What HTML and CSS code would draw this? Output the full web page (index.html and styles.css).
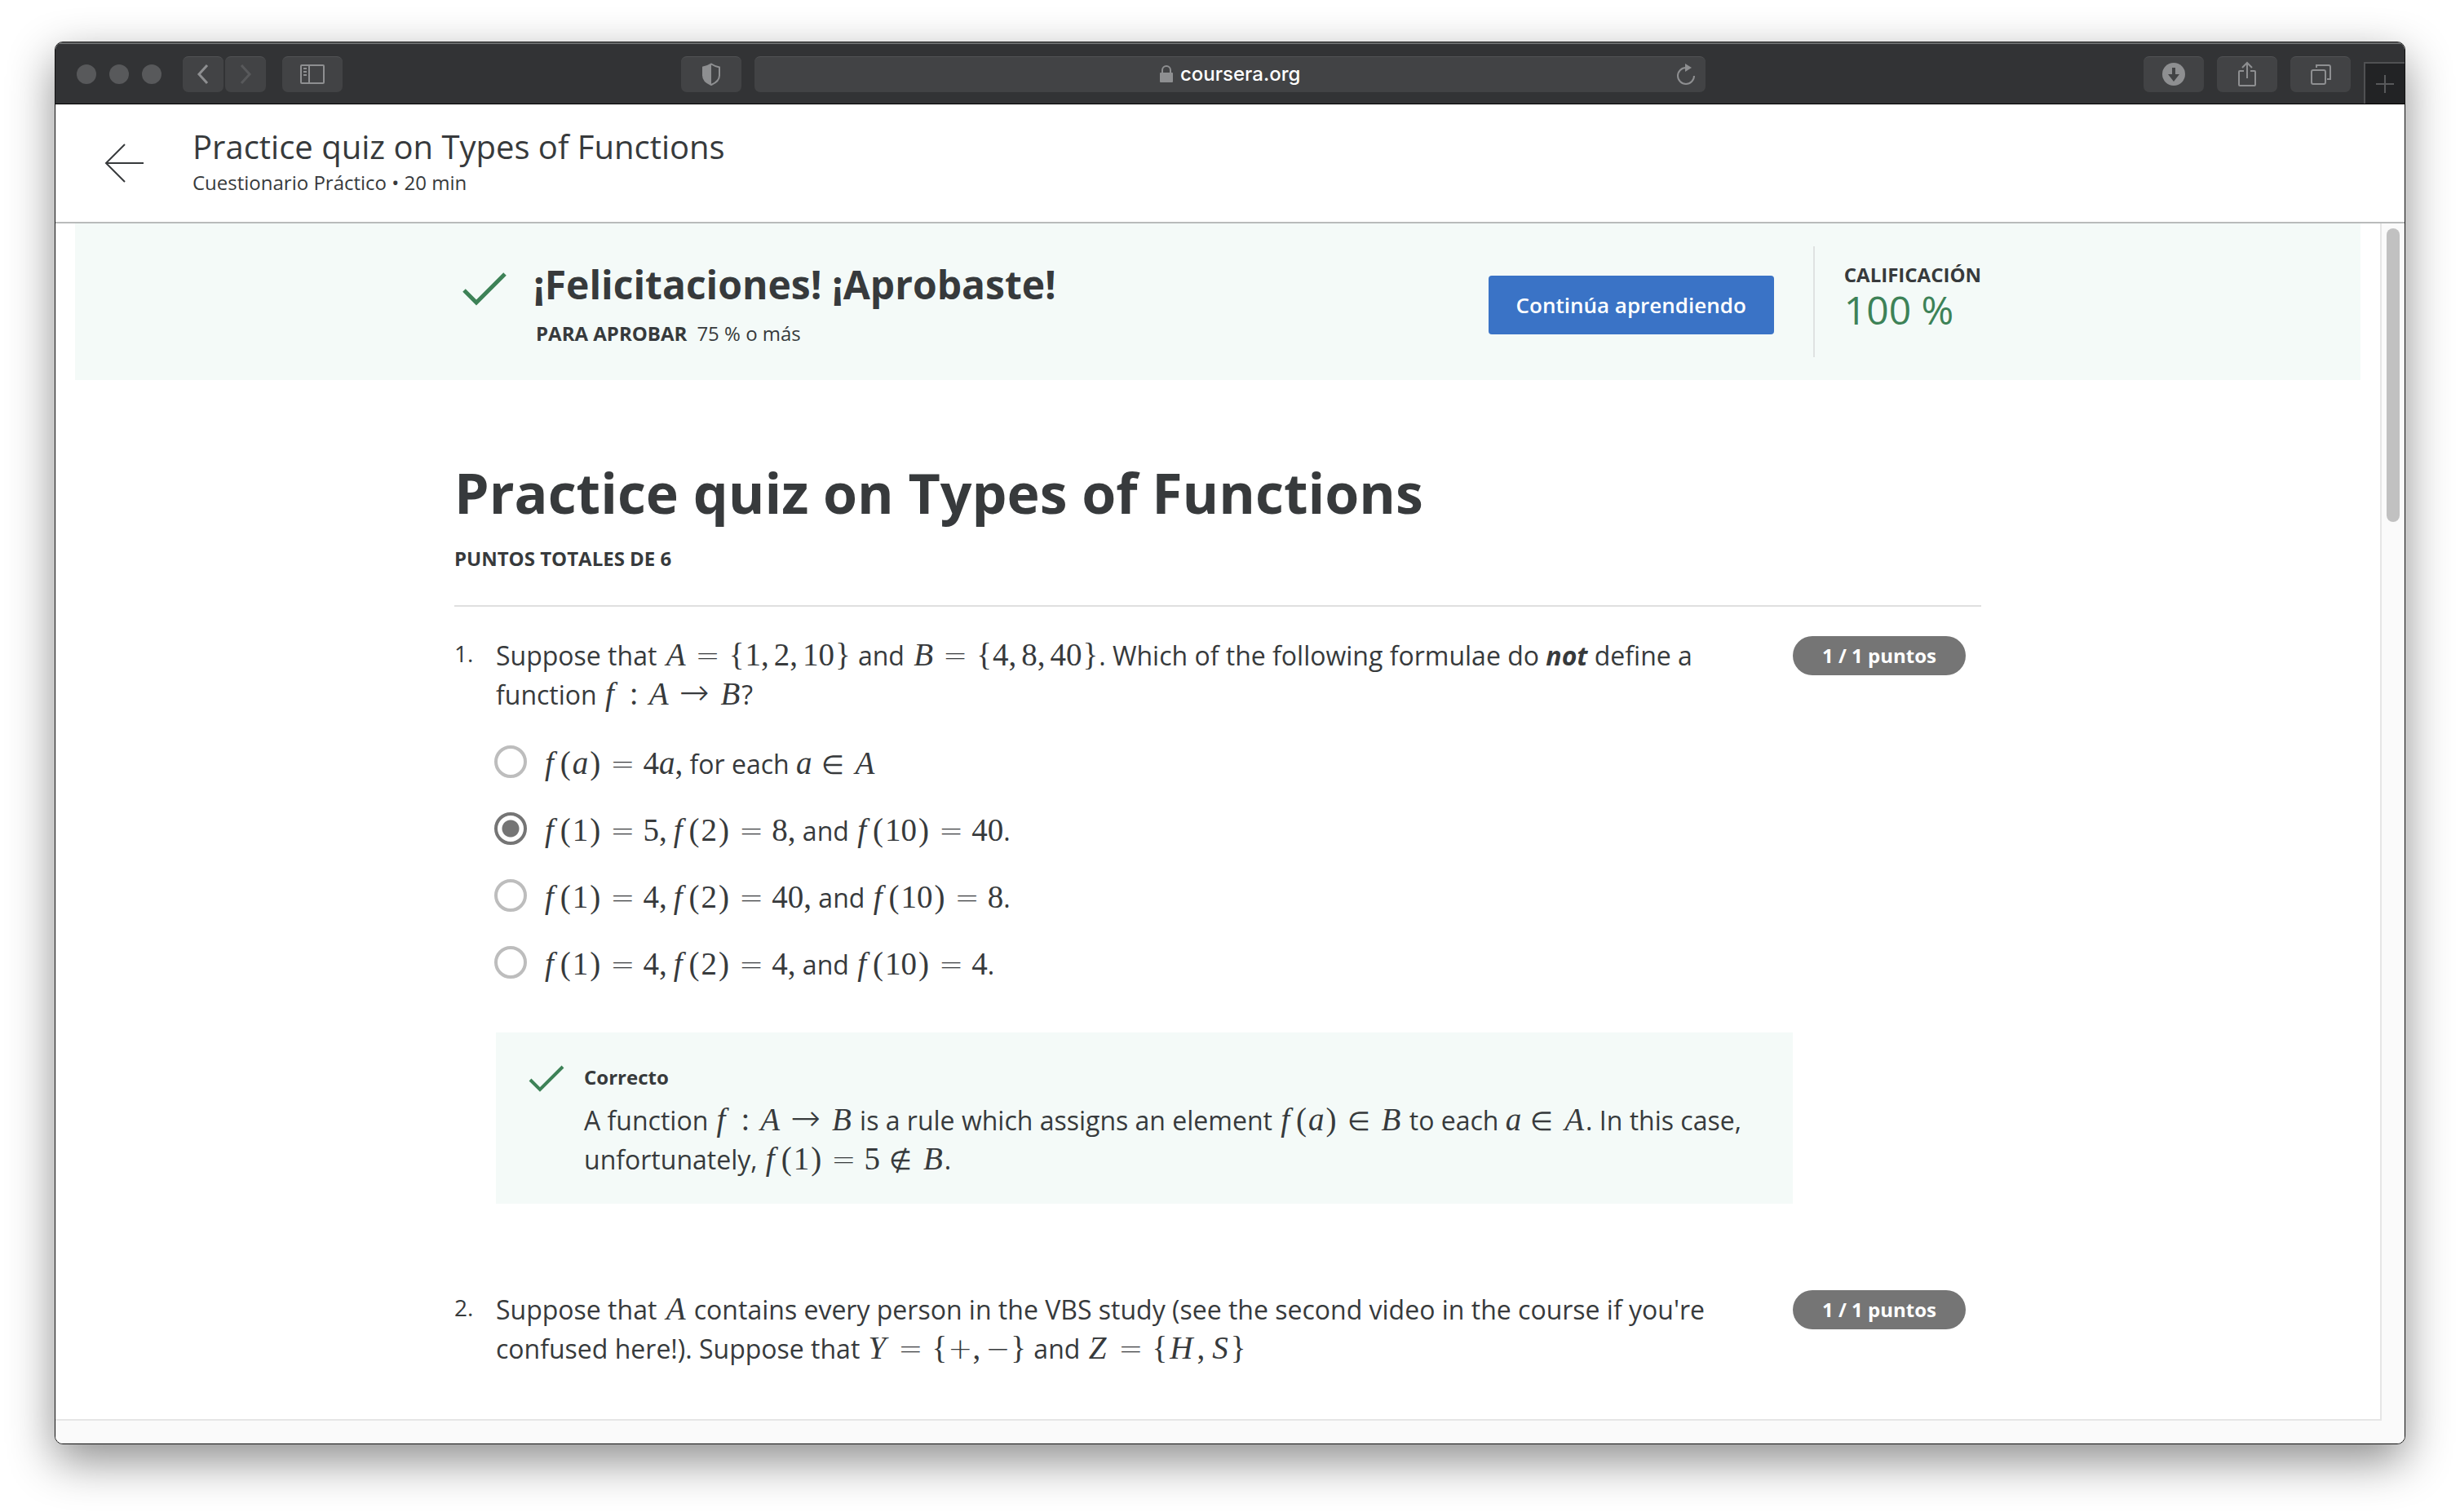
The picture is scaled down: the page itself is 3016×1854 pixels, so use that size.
FILE: index.html
```html
<!DOCTYPE html>
<html lang="es">
<head>
<meta charset="utf-8">
<meta name="viewport" content="width=device-width, initial-scale=1">
<title>Practice quiz on Types of Functions</title>
<link rel="stylesheet" href="styles.css">
</head>
<body>
<div class="window">
  <div class="toolbar">
    <div class="toolbar-left">
      <div class="lights"><span class="light"></span><span class="light"></span><span class="light"></span></div>
      <div class="nav-pair">
        <button class="tool nav" type="button" aria-label="Atrás"><svg width="16" height="26" viewBox="0 0 16 26"><path d="M13 2 3 13l10 11" fill="none" stroke="#8e8f91" stroke-width="3"/></svg></button>
        <button class="tool nav" type="button" aria-label="Adelante"><svg width="16" height="26" viewBox="0 0 16 26"><path d="m3 2 10 11L3 24" fill="none" stroke="#58595b" stroke-width="3"/></svg></button>
      </div>
      <button class="tool" type="button" aria-label="Barra lateral"><svg width="30" height="24" viewBox="0 0 30 24" fill="none" stroke="#8e8f91" stroke-width="2"><rect x="1" y="1" width="28" height="22" rx="1"/><path d="M11 1v22M4 5h4M4 9h4M4 13h4"/></svg></button>
      <button class="tool shield" type="button" aria-label="Privacidad"><svg width="24" height="28" viewBox="0 0 24 28"><path d="M12 1.500c3 2 6 3 10 4v10c0 5-4 9-10 11.500C6 24.500 2 20.500 2 15.500v-10c4-1 7-2 10-4z" fill="none" stroke="#8e8f91" stroke-width="2"/><path d="M12 1.500v25.500C6 24.500 2 20.500 2 15.500v-10c4-1 7-2 10-4z" fill="#8e8f91"/></svg></button>
    </div>
    <div class="address">
      <svg width="18" height="22" viewBox="0 0 18 22"><path d="M4 10V6a5 5 0 0 1 10 0v4" fill="none" stroke="#8e8f91" stroke-width="2"/><rect x="1" y="9" width="16" height="12" rx="1" fill="#8e8f91"/></svg>
      <input class="url" type="text" value="coursera.org" aria-label="Dirección">
      <button class="reload" type="button" aria-label="Recargar"><svg width="24" height="28" viewBox="0 0 24 28"><path d="M12 6a10 10 0 1 0 10 10" fill="none" stroke="#8e8f91" stroke-width="2"/><path d="M11 1v10l8-5z" fill="#8e8f91"/></svg></button>
    </div>
    <div class="toolbar-right">
      <button class="tool" type="button" aria-label="Descargas"><svg width="28" height="28" viewBox="0 0 28 28"><circle cx="14" cy="14" r="14" fill="#8e8f91"/><path d="M12 6h4v8h5l-7 9-7-9h5z" fill="#424345"/></svg></button>
      <button class="tool" type="button" aria-label="Compartir"><svg width="24" height="32" viewBox="0 0 24 32" fill="none" stroke="#8e8f91" stroke-width="2"><path d="M8 12H3a1 1 0 0 0-1 1v16a1 1 0 0 0 1 1h18a1 1 0 0 0 1-1V13a1 1 0 0 0-1-1h-5M12 21V2M6 8l6-6 6 6"/></svg></button>
      <button class="tool" type="button" aria-label="Pestañas"><svg width="26" height="26" viewBox="0 0 26 26" fill="none" stroke="#8e8f91" stroke-width="2"><rect x="2" y="8" width="17" height="17" rx="2"/><path d="M8 5V2h15a2 2 0 0 1 2 2v15h-4"/></svg></button>
      <button class="new-tab" type="button" aria-label="Nueva pestaña"><svg width="22" height="22" viewBox="0 0 22 22"><path d="M11 0v22M0 11h22" stroke="#58595b" stroke-width="2"/></svg></button>
    </div>
  </div>

  <header class="header">
    <a class="back" href="#" aria-label="Volver"><svg width="50" height="50" viewBox="0 0 50 50"><path d="M25 2 2 25l23 23M2 25h46" fill="none" stroke="#373a3c" stroke-width="2"/></svg></a>
    <div>
      <div class="header-title">Practice quiz on Types of Functions</div>
      <div class="header-sub">Cuestionario Práctico • 20 min</div>
    </div>
  </header>

  <div class="pane">
    <main class="scroller">
      <section class="banner">
        <div class="column banner-row">
          <svg class="banner-check" width="56" height="44" viewBox="0 0 56 44"><path d="M3 24l15 15L53 4" fill="none" stroke="#3d8257" stroke-width="5"/></svg>
          <div class="result">
            <h2 class="result-title">¡Felicitaciones! ¡Aprobaste!</h2>
            <p class="result-sub"><strong>PARA APROBAR</strong><span>75 % o más</span></p>
          </div>
          <button class="continue" type="button">Continúa aprendiendo</button>
          <div class="score">
            <div class="score-label">CALIFICACIÓN</div>
            <div class="score-value">100 %</div>
          </div>
        </div>
      </section>

      <div class="column">
        <h1 class="quiz-title">Practice quiz on Types of Functions</h1>
        <p class="total">PUNTOS TOTALES DE 6</p>

        <section class="question">
          <div class="number">1.</div>
          <div class="body">
            <p class="prompt" id="q1">Suppose that <span class="m"><i>A</i><b>=</b><u class="brace">{</u>1<s>,</s>2<s>,</s>10<u class="brace">}</u></span> and <span class="m"><i>B</i><b>=</b><u class="brace">{</u>4<s>,</s>8<s>,</s>40<u class="brace">}</u></span>. Which of the following formulae do <strong><em>not</em></strong> define a function <span class="m"><i class="f">f</i><b class="colon">:</b><i>A</i><b class="arrow">→</b><i>B</i></span>?</p>
            <div class="options" role="radiogroup" aria-labelledby="q1">
              <label class="option"><input type="radio" name="q1"><span><span class="m"><i class="f">f</i><u>(</u><i class="a">a</i><u>)</u><b>=</b>4<i class="a">a</i>,</span> for each <span class="m"><i class="a">a</i><b class="in">∈</b><i>A</i></span></span></label>
              <label class="option"><input type="radio" name="q1" checked><span><span class="m"><i class="f">f</i><u>(</u>1<u>)</u><b>=</b>5<s>,</s><i class="f">f</i><u>(</u>2<u>)</u><b>=</b>8,</span> and <span class="m"><i class="f">f</i><u>(</u>10<u>)</u><b>=</b>40</span>.</span></label>
              <label class="option"><input type="radio" name="q1"><span><span class="m"><i class="f">f</i><u>(</u>1<u>)</u><b>=</b>4<s>,</s><i class="f">f</i><u>(</u>2<u>)</u><b>=</b>40,</span> and <span class="m"><i class="f">f</i><u>(</u>10<u>)</u><b>=</b>8</span>.</span></label>
              <label class="option"><input type="radio" name="q1"><span><span class="m"><i class="f">f</i><u>(</u>1<u>)</u><b>=</b>4<s>,</s><i class="f">f</i><u>(</u>2<u>)</u><b>=</b>4,</span> and <span class="m"><i class="f">f</i><u>(</u>10<u>)</u><b>=</b>4</span>.</span></label>
            </div>
            <div class="feedback">
              <svg width="44" height="34" viewBox="0 0 44 34"><path d="M2 19l12 12L42 3" fill="none" stroke="#3d8257" stroke-width="4"/></svg>
              <div>
                <div class="feedback-title">Correcto</div>
                <p class="feedback-text">A function <span class="m"><i class="f">f</i><b class="colon">:</b><i>A</i><b class="arrow">→</b><i>B</i></span> is a rule which assigns an element <span class="m"><i class="f">f</i><u>(</u><i class="a">a</i><u>)</u><b class="in">∈</b><i>B</i></span> to each <span class="m"><i class="a">a</i><b class="in">∈</b><i>A</i></span>. In this case, unfortunately, <span class="m"><i class="f">f</i><u>(</u>1<u>)</u><b>=</b>5<b class="in">∉</b><i>B</i></span>.</p>
              </div>
            </div>
          </div>
          <div class="badge">1 / 1 puntos</div>
        </section>

        <section class="question">
          <div class="number">2.</div>
          <div class="body">
            <p class="prompt">Suppose that <span class="m"><i>A</i></span> contains every person in the VBS study (see the second video in the course if you're confused here!). Suppose that <span class="m"><i class="wide">Y</i><b>=</b><u class="brace">{</u><b class="sign">+</b><s>,</s><b class="sign">−</b><u class="brace">}</u></span> and <span class="m"><i class="wide">Z</i><b>=</b><u class="brace">{</u><i class="wide">H</i><s>,</s><i>S</i><u class="brace">}</u></span></p>
          </div>
          <div class="badge">1 / 1 puntos</div>
        </section>
      </div>
    </main>
    <div class="track"><div class="thumb"></div></div>
  </div>
</div>
</body>
</html>
```

FILE: styles.css
```css
* { box-sizing: border-box; }

body {
  margin: 0;
  min-height: 100vh;
  display: flex;
  padding: 51px 67px 83px;
  background: #fff;
  color: #373a3c;
  font-family: "Open Sans", "Noto Sans", sans-serif;
  font-size: 32px;
  line-height: 48px;
}

h1, h2, p { margin: 0; }
button { font: inherit; border: 0; padding: 0; margin: 0; }
svg { display: block; flex: none; }

.window {
  flex: 1;
  min-width: 0;
  display: flex;
  flex-direction: column;
  border: 1px solid #111;
  border-radius: 10px;
  overflow: hidden;
  background: #fff;
  box-shadow: 0 20px 56px rgba(0, 0, 0, .45);
}

/* Browser toolbar */
.toolbar {
  height: 76px;
  display: grid;
  grid-template-columns: minmax(0, 1fr) minmax(0, 1166px) minmax(0, 1fr);
  gap: 16px;
  background: #323335;
  border-top: 2px solid #6c6e6f;
  border-bottom: 1px solid #000;
}
.toolbar-left, .toolbar-right { display: flex; align-items: center; }
.toolbar-left { padding-left: 26px; }
.toolbar-right { justify-content: flex-end; gap: 16px; }
.lights { display: flex; gap: 16px; margin-right: 26px; }
.light { width: 24px; height: 24px; border-radius: 50%; background: #58595b; }
.nav-pair { display: flex; gap: 2px; margin-right: 20px; }
.tool {
  width: 74px;
  height: 44px;
  flex: none;
  display: flex;
  align-items: center;
  justify-content: center;
  background: #424345;
  border-top: 1px solid #525355;
  border-radius: 7px;
}
.nav { width: 50px; }
.shield { margin-left: auto; }
.address {
  height: 44px;
  align-self: center;
  position: relative;
  display: flex;
  align-items: center;
  justify-content: center;
  gap: 8px;
  background: #424345;
  border-top: 1px solid #525355;
  border-radius: 7px;
}
.url {
  width: 148px;
  height: 40px;
  padding: 0;
  border: 0;
  background: none;
  color: #fff;
  font: 500 24px/40px Inter, sans-serif;
}
.reload {
  position: absolute;
  right: 12px;
  background: none;
}
.new-tab {
  width: 50px;
  align-self: flex-end;
  height: 51px;
  display: flex;
  align-items: center;
  justify-content: center;
  background: #222325;
  border-left: 2px solid #505153;
  border-top: 2px solid #505153;
}

/* Quiz header */
.header {
  display: flex;
  align-items: flex-start;
  gap: 58px;
  padding: 26px 60px 30px;
  border-bottom: 2px solid #b9bbbb;
}
.back { margin-top: 21px; }
.header-title { font-size: 40px; line-height: 52px; }
.header-sub { font-size: 24px; line-height: 36px; }

/* Scrolling area */
.pane { flex: 1; display: flex; padding-bottom: 28px; background: #fafafa; }
.scroller {
  flex: 1;
  min-width: 0;
  padding: 0 24px;
  overflow: hidden;
  background: #fff;
  border-right: 2px solid #e6e6e6;
  border-bottom: 2px solid #e6e6e6;
}
.track { width: 28px; padding: 6px; }
.thumb { width: 16px; height: 360px; border-radius: 8px; background: #c1c1c1; }
.column { max-width: 1872px; margin: 0 auto; }

.banner { background: #f4faf8; }
.banner-row { display: flex; align-items: center; min-height: 192px; padding-left: 9px; }
.banner-check { margin: 0 32px 32px 0; }
.result { flex: 1; padding-top: 2px; }
.result-title { font-size: 48px; line-height: 64px; font-weight: 700; }
.result-sub {
  display: flex;
  gap: 12px;
  margin-top: 12px;
  padding-left: 3px;
  font-size: 24px;
  line-height: 32px;
}
.continue {
  margin: 8px 48px 0 0;
  height: 72px;
  padding: 0 34px;
  border-radius: 4px;
  background: #3a73c6;
  color: #fff;
  font-size: 26px;
  font-weight: 600;
}
.score { border-left: 2px solid #dfe2e2; padding: 18px 0 32px 36px; }
.score-label { font-size: 24px; line-height: 34px; font-weight: 700; }
.score-value { font-size: 48px; line-height: 52px; color: #3d8257; }

.quiz-title { padding-top: 92px; font-size: 68px; line-height: 92px; font-weight: 700; }
.total {
  margin: 17px 0 36px;
  padding-bottom: 39px;
  border-bottom: 2px solid #dfdfdf;
  font-size: 24px;
  line-height: 36px;
  font-weight: 700;
}

/* Questions */
.question {
  display: grid;
  grid-template-columns: 51px minmax(0, 1fr) 231px;
  align-items: start;
  margin-bottom: 106px;
}
.question:last-child { margin-bottom: 40px; }
.number { font-size: 28px; line-height: 42px; }
.prompt { padding-right: 40px; }
.badge {
  justify-self: start;
  padding: 0 36px;
  border-radius: 24px;
  background: #757575;
  color: #fff;
  font-size: 24px;
  font-weight: 700;
}
.options { display: grid; gap: 34px; margin: 37px 0 59px; }
.option { display: flex; align-items: flex-start; gap: 20px; }
.option input {
  appearance: none;
  width: 40px;
  height: 40px;
  margin: 1px 0 0 -2px;
  flex: none;
  border: 4px solid #bdbdbd;
  border-radius: 50%;
}
.option input:checked {
  border-color: #757575;
  background: radial-gradient(circle, #757575 10px, transparent 11px);
}
.feedback {
  display: flex;
  gap: 24px;
  padding: 39px 40px 30px;
  background: #f4faf8;
}
.feedback-title { margin-bottom: 13px; font-size: 24px; line-height: 32px; font-weight: 700; }

/* Inline formulas: i variable, b relation or sign, u bracket, s comma */
.m {
  font-family: "Liberation Serif", "DejaVu Serif", serif;
  font-size: 39px;
  line-height: 32px;
  white-space: nowrap;
}
.m b, .m u, .m s { font-weight: 400; text-decoration: none; }
.m i { padding: 0 2px 0 3px; }
.m .wide { padding: 0 5px 0 2px; }
.m .f { padding: 0 6px 0 2px; }
.m .a { padding: 0; }
.m u { padding: 0 2px; }
.m .brace { padding: 0 1px; }
.m s { padding-right: 6px; }
.m b { margin: 0 10px; font-family: "DejaVu Sans", sans-serif; font-weight: 200; font-size: 36px; }
.m .colon { margin-left: 13px; font-family: "Liberation Serif", serif; font-size: 39px; }
.m .arrow { margin: 0 11px; font-size: 44px; }
.m .in { margin: 0 11px; font-size: 32px; }
.m .sign { margin: 0; }
```
